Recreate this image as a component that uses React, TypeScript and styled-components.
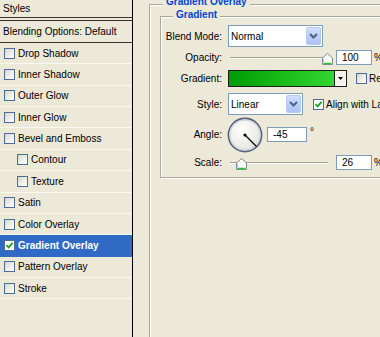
import React from 'react';
import styled, { createGlobalStyle } from 'styled-components';

const Global = createGlobalStyle`
  html, body { margin: 0; padding: 0; background: #ECE9D8; overflow: hidden; }
  body { font-family: "Liberation Sans", Arial, sans-serif; font-size: 10px; color: #000; }
  * { box-sizing: border-box; }
`;

const Dialog = styled.div`
  display: flex;
  width: 380px;
  height: 337px;
  overflow: hidden;
  background: #ECE9D8;
`;

const Sidebar = styled.div`
  width: 133px;
  flex: none;
  border-right: 1px solid #000;
  display: flex;
  flex-direction: column;
`;

const SideHeader = styled.div`
  height: 18px;
  line-height: 17px;
  padding-left: 3px;
  border-bottom: 1px solid #333;
  margin-bottom: 2px;
`;

const BlendRow = styled.div`
  height: 23px;
  display: flex;
  align-items: center;
  padding-left: 3px;
  border-top: 1px solid #333;
  border-bottom: 1px solid #333;
`;

const ListRow = styled.div<{ $selected?: boolean; $indent?: boolean }>`
  height: 21.36px;
  flex: none;
  display: flex;
  align-items: center;
  gap: 3px;
  padding-left: ${(p) => (p.$indent ? '17px' : '4px')};
  border-bottom: 1px solid ${(p) => (p.$selected ? '#316AC5' : '#faf9f3')};
  background: ${(p) => (p.$selected ? '#316AC5' : 'transparent')};
  color: ${(p) => (p.$selected ? '#fff' : '#000')};
  font-weight: ${(p) => (p.$selected ? 'bold' : 'normal')};
`;

const Box = styled.span<{ $on?: boolean }>`
  width: 11px;
  height: 11px;
  flex: none;
  border: 1px solid #4e6d94;
  background: ${(p) =>
    p.$on ? '#ffffff' : 'linear-gradient(135deg, #d6d6ce 0%, #f1f1ec 60%, #ffffff 100%)'};
  display: inline-flex;
  align-items: center;
  justify-content: center;
`;

const Main = styled.div`
  flex: 1;
  padding: 4px 0 0 16px;
`;

const Group = styled.div<{ $w: number; $h: number; $pt: number; $pl: number }>`
  position: relative;
  flex: none;
  width: ${(p) => p.$w}px;
  height: ${(p) => p.$h}px;
  border: 1px solid #aaa899;
  box-shadow: inset 1px 1px 0 #fff, 1px 1px 0 #fff;
  padding: ${(p) => p.$pt}px 0 0 ${(p) => p.$pl}px;
  display: flex;
  flex-direction: column;
`;

const Legend = styled.span<{ $left: number; $top: number }>`
  position: absolute;
  top: ${(p) => p.$top}px;
  left: ${(p) => p.$left}px;
  padding: 0 3px;
  line-height: 12px;
  background: #ECE9D8;
  color: #0046D5;
  font-weight: bold;
  white-space: nowrap;
`;

const Row = styled.div<{ $h: number; $mt: number }>`
  display: flex;
  align-items: center;
  height: ${(p) => p.$h}px;
  margin-top: ${(p) => p.$mt}px;
  white-space: nowrap;
`;

const Label = styled.span`
  width: 61px;
  margin-right: 6px;
  text-align: right;
  flex: none;
`;

const Select = styled.div<{ $w: number }>`
  width: ${(p) => p.$w}px;
  height: 22px;
  flex: none;
  border: 1px solid #7F9DB9;
  background: #fff;
  display: flex;
  align-items: center;
  justify-content: space-between;
  padding: 0 1px 0 2px;
`;

const DropBtn = styled.span`
  width: 15px;
  height: 18px;
  border: 1px solid #b7c9f3;
  border-radius: 2px;
  background: linear-gradient(180deg, #d2defc 0%, #b9ccf8 60%, #aec3f4 100%);
  display: flex;
  align-items: center;
  justify-content: center;
`;

const SliderWrap = styled.div`
  position: relative;
  width: 108px;
  height: 15px;
  flex: none;
`;

const Track = styled.div`
  position: absolute;
  left: 2px;
  right: 8px;
  top: 7px;
  height: 2px;
  border-top: 1px solid #a2a08f;
  border-bottom: 1px solid #fff;
`;

const Thumb = styled.svg`
  position: absolute;
  top: 3px;
`;

const Field = styled.div<{ $w: number }>`
  width: ${(p) => p.$w}px;
  height: 15px;
  flex: none;
  border: 1px solid #7F9DB9;
  background: #fff;
  padding-left: 5px;
  line-height: 13px;
`;

const Unit = styled.span`
  margin-left: 2px;
`;

const Swatch = styled.div`
  width: 107px;
  height: 17px;
  flex: none;
  border: 1px solid #1e1e1e;
  background: linear-gradient(90deg, #009a08 0%, #19bb16 50%, #33d630 100%);
`;

const SwatchBtn = styled.div`
  width: 12px;
  height: 17px;
  flex: none;
  border: 1px solid #1e1e1e;
  border-left: none;
  background: #f4f3ee;
  display: flex;
  align-items: center;
  justify-content: center;
`;

const CheckLabel = styled.span<{ $ml: number }>`
  display: flex;
  align-items: center;
  gap: 2px;
  margin-left: ${(p) => p.$ml}px;
`;

const Degree = styled.span`
  align-self: flex-start;
  margin: 9px 0 0 3px;
`;

const Dial = styled.svg`
  flex: none;
  margin-left: -1px;
  margin-right: 4px;
`;

const Tick = () => (
  <svg width="9" height="9" viewBox="0 0 9 9">
    <path d="M1.5 4.2 L3.6 6.4 L7.6 1.8" fill="none" stroke="#21a121" strokeWidth="1.8" />
  </svg>
);

const Chevron = () => (
  <svg width="9" height="6" viewBox="0 0 9 6">
    <path d="M1 1 L4.5 4.5 L8 1" fill="none" stroke="#4d6185" strokeWidth="2" />
  </svg>
);

const Check = ({ on }: { on?: boolean }) => <Box $on={on}>{on && <Tick />}</Box>;

const ThumbIcon = ({ left }: { left: number }) => (
  <Thumb width="11" height="12" viewBox="0 0 11 12" style={{ left }}>
    <path d="M0.5 5 L5.5 0.5 L10.5 5 L10.5 11.5 L0.5 11.5 Z" fill="#fbfbf8" stroke="#7f8c98" strokeWidth="1" />
    <path d="M1.5 10.5 L9.5 10.5" stroke="#32c032" strokeWidth="1.5" />
    <path d="M1.5 6 L1.5 9.5" stroke="#9fe09f" strokeWidth="1" />
  </Thumb>
);

const Slider = ({ value, min, max }: { value: number; min: number; max: number }) => {
  const left = 2 + ((value - min) / (max - min)) * 97 - 5;
  return (
    <SliderWrap>
      <Track />
      <ThumbIcon left={left} />
    </SliderWrap>
  );
};

const items: { label: string; indent?: boolean; on?: boolean; selected?: boolean }[] = [
  { label: 'Drop Shadow' },
  { label: 'Inner Shadow' },
  { label: 'Outer Glow' },
  { label: 'Inner Glow' },
  { label: 'Bevel and Emboss' },
  { label: 'Contour', indent: true },
  { label: 'Texture', indent: true },
  { label: 'Satin' },
  { label: 'Color Overlay' },
  { label: 'Gradient Overlay', on: true, selected: true },
  { label: 'Pattern Overlay' },
  { label: 'Stroke' },
];

export default function App() {
  return (
    <>
      <Global />
      <Dialog>
        <Sidebar>
          <SideHeader>Styles</SideHeader>
          <BlendRow>Blending Options: Default</BlendRow>
          {items.map((it) => (
            <ListRow key={it.label} $selected={it.selected} $indent={it.indent}>
              <Check on={it.on} />
              {it.label}
            </ListRow>
          ))}
        </Sidebar>
        <Main>
          <Group $w={300} $h={400} $pt={11} $pl={10}>
            <Legend $left={13} $top={-9}>Gradient Overlay</Legend>
            <Group $w={260} $h={162} $pt={8} $pl={0}>
              <Legend $left={12} $top={-8}>Gradient</Legend>
              <Row $h={22} $mt={0}>
                <Label>Blend Mode:</Label>
                <Select $w={95}>
                  Normal
                  <DropBtn>
                    <Chevron />
                  </DropBtn>
                </Select>
              </Row>
              <Row $h={15} $mt={3}>
                <Label>Opacity:</Label>
                <Slider value={100} min={0} max={100} />
                <Field $w={36}>100</Field>
                <Unit>%</Unit>
              </Row>
              <Row $h={17} $mt={5}>
                <Label>Gradient:</Label>
                <Swatch />
                <SwatchBtn>
                  <svg width="5" height="3" viewBox="0 0 5 3">
                    <path d="M0 0 H5 L2.5 3 Z" fill="#000" />
                  </svg>
                </SwatchBtn>
                <CheckLabel $ml={9}>
                  <Check />
                  Reverse
                </CheckLabel>
              </Row>
              <Row $h={22} $mt={6}>
                <Label>Style:</Label>
                <Select $w={75}>
                  Linear
                  <DropBtn>
                    <Chevron />
                  </DropBtn>
                </Select>
                <CheckLabel $ml={10}>
                  <Check on />
                  Align with Layer
                </CheckLabel>
              </Row>
              <Row $h={35} $mt={2}>
                <Label>Angle:</Label>
                <Dial width="36" height="36" viewBox="0 0 36 36">
                  <defs>
                    <radialGradient id="dialFill" cx="40%" cy="35%" r="70%">
                      <stop offset="0" stopColor="#ffffff" />
                      <stop offset="1" stopColor="#e2e2dd" />
                    </radialGradient>
                  </defs>
                  <circle cx="18" cy="18" r="16.6" fill="url(#dialFill)" stroke="#56627c" strokeWidth="1.6" />
                  <circle cx="18" cy="18" r="15" fill="none" stroke="#cfd3dc" strokeWidth="1" />
                  <line x1="18" y1="18" x2="29.5" y2="29.5" stroke="#000" strokeWidth="1.2" />
                  <circle cx="18" cy="18" r="1.6" fill="#000" />
                </Dial>
                <Field $w={40}>-45</Field>
                <Degree>°</Degree>
              </Row>
              <Row $h={15} $mt={3}>
                <Label>Scale:</Label>
                <Slider value={26} min={10} max={150} />
                <Field $w={36}>26</Field>
                <Unit>%</Unit>
              </Row>
            </Group>
          </Group>
        </Main>
      </Dialog>
    </>
  );
}
